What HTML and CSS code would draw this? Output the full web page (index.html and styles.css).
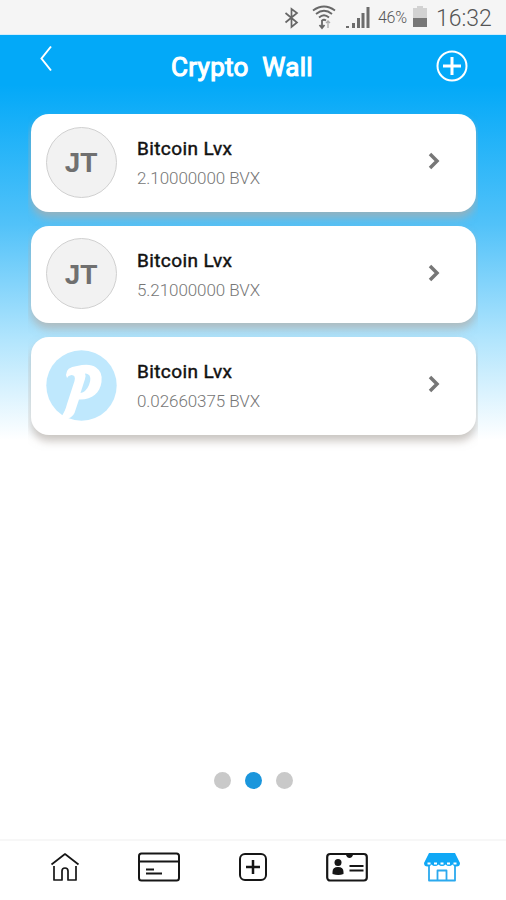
FILE: index.html
```html
<!DOCTYPE html>
<html lang="en">
<head>
<meta charset="utf-8">
<title>Crypto Wall</title>
<link rel="stylesheet" href="styles.css">
</head>
<body>
<div class="status">
  <svg class="bt" width="16" height="22" viewBox="0 0 16 22"><path d="M1.5 6 13 15.5 7.5 20V2L13 6 1.5 15.5"/></svg>
  <svg class="wifi" width="26" height="25" viewBox="0 0 26 25"><path d="M2 5.500Q13-2.500 24 5.500M5 9Q13 2.500 21 9M8 12.500Q13 8 18 12.500M11 15.500q2-1.500 4 0"/><path class="down" d="M11 15v7M8.500 20l2.500 3 2.500-3"/><path class="up" d="M17 23v-7M15 18l2-2 2 2"/></svg>
  <svg class="signal" width="24" height="22" viewBox="0 0 24 22"><path d="M0 19h3v2H0zM6 16h3v5H6zM11 11h3v10h-3zM15.500 6h3v15h-3zM20.500 0h3v21h-3z"/></svg>
  <span class="percent">46%</span>
  <svg class="battery" width="14" height="21" viewBox="0 0 14 21"><path fill="#d2d2d2" d="M4 0h6v2h4v11H0V2h4z"/><path fill="#777" d="M0 12h14v9H0z"/></svg>
  <span class="time">16:32</span>
</div>
<div class="screen">
  <header class="header">
    <svg class="back" width="14" height="27" viewBox="0 0 14 27"><path d="M12 1.500 2.500 13.500 12 25.500"/></svg>
    <h1>Crypto&nbsp; Wall</h1>
    <svg class="add" width="32" height="32" viewBox="0 0 32 32"><circle cx="16" cy="16" r="14.500"/><path d="M16 7v18M7 16h18"/></svg>
  </header>
  <main class="cards">
    <article class="card">
      <div class="avatar">JT</div>
      <div class="info"><h2>Bitcoin Lvx</h2><p>2.10000000 BVX</p></div>
      <svg class="go" width="12" height="18" viewBox="0 0 12 18"><path d="M2 2l7 7-7 7"/></svg>
    </article>
    <article class="card">
      <div class="avatar">JT</div>
      <div class="info"><h2>Bitcoin Lvx</h2><p>5.21000000 BVX</p></div>
      <svg class="go" width="12" height="18" viewBox="0 0 12 18"><path d="M2 2l7 7-7 7"/></svg>
    </article>
    <article class="card">
      <svg class="coin" width="71" height="71" viewBox="0 0 71 71"><circle cx="35.500" cy="35.500" r="35.200" fill="#bfe8fd"/><path fill="#fff" fill-rule="evenodd" d="M20 25Q20 17 31 16Q44 13 50 17.500Q57 22 55.500 32C54 43 46 50 33 49.500L28.500 63Q26 68.500 19 69L15 67Q19 62 21 54L28.500 31Q30 25 25.500 25Q22 25.500 21 28ZM39 23.500Q40 25 39 29L34.500 43Q40 42 43 35Q47 24 39 23.500Z"/></svg>
      <div class="info"><h2>Bitcoin Lvx</h2><p>0.02660375 BVX</p></div>
      <svg class="go" width="12" height="18" viewBox="0 0 12 18"><path d="M2 2l7 7-7 7"/></svg>
    </article>
  </main>
  <div class="dots"><i></i><i class="on"></i><i></i></div>
</div>
<nav class="tabs">
  <svg width="30" height="30" viewBox="0 0 30 30"><path stroke-width="1.700" d="M1.500 12.500 15 2l13.500 10.500M4 14v14h8v-9q0-3 3-3t3 3v9h8V14"/></svg>
  <svg width="42" height="30" viewBox="0 0 42 30"><rect x="1" y="1.500" width="40" height="27" rx="2.500" stroke-width="2"/><path stroke-width="2" d="M1 9.500h40"/><path stroke-width="1.800" d="M8 17.500h8M8 21.500h16"/></svg>
  <svg width="30" height="30" viewBox="0 0 30 30"><rect x="2" y="2" width="26" height="26" rx="5" stroke-width="2"/><path stroke-width="2.500" d="M15 8v14M8 15h14"/></svg>
  <svg width="42" height="30" viewBox="0 0 42 30"><rect x="1.200" y="2" width="39.600" height="26.500" rx="3" stroke-width="2.200"/><path fill="#161616" stroke="none" d="M20 1h7v2q-1 3-3.500 3T20 3zM6.500 22v-2q0-5 5.500-5t5.500 5v2q-5 2-11 0z"/><circle cx="12" cy="10.500" r="3.500" fill="#161616" stroke="none"/><path stroke-width="2" d="M23.500 14h14M23.500 18.500h14"/></svg>
  <svg class="shop" width="38" height="30" viewBox="0 0 38 30"><path stroke-width="1.800" d="M6 11v17.500h26V11M14.500 28V18.500h9V28"/><path fill="#10a8f6" stroke="none" d="M6 1h26l5 10q0 3.500-3.500 3.500-3 0-4-2-1.500 1.500-3.500 1.500t-3.500-1.500Q21 14 19 14t-3.500-1.500Q14 14 12 14t-3.500-1.500q-1 2-4 2Q1 14.500 1 11z"/><path stroke="#fff" stroke-width="1.800" d="M4.500 11.500h3M11 11.500h3M17.500 11.500h3M24 11.500h3M30.500 11.500h3"/></svg>
</nav>
</body>
</html>
```

FILE: styles.css
```css
* { box-sizing: border-box; }
body { margin: 0; width: 506px; height: 900px; display: flex; flex-direction: column; overflow: hidden; background: #fff; font-family: Roboto, sans-serif; }
svg { flex: none; fill: none; }
h1, h2, p { margin: 0; white-space: nowrap; }

.status { height: 35px; flex: none; display: flex; align-items: flex-start; padding: 6px 0 0 284px; background: #f5f5f5; border-bottom: 1px solid #d2edfb; color: #777; }
.bt { margin-top: 1px; stroke: #666; stroke-width: 1.7; }
.wifi { margin-left: 11px; margin-top: -1px; stroke: #686868; stroke-width: 1.8; }
.wifi .up { stroke: #aaa; stroke-width: 1.3; }
.signal { margin-left: 9px; margin-top: 1px; fill: #6c6c6c; }
.percent { width: 35px; padding-left: 8px; font-size: 16px; line-height: 24px; letter-spacing: -.3px; font-weight: 300; color: #555; }
.battery { margin-left: 8px; }
.time { margin-left: 9px; font-size: 23px; line-height: 25px; font-weight: 300; color: #555; }

.screen { height: 804px; flex: none; display: flex; flex-direction: column; background: linear-gradient(#03a9f8 0, #03a9f8 50px, #52c2f9 190px, #b2e5fd 305px, #fff 405px); }
.header { height: 70px; flex: none; display: flex; align-items: flex-start; padding: 0 37px 0 39px; }
.back { margin-top: 10px; stroke: #fff; stroke-width: 2; }
h1 { margin: 17px 0 0 118px; width: 265px; font-size: 26px; line-height: 30px; font-weight: 400; letter-spacing: .3px; color: #fff; -webkit-text-stroke: 1.1px #fff; }
.add { margin: 15px 0 0; stroke: #fff; stroke-width: 2; }
.add path { stroke-width: 3; }

.cards { height: 350px; flex: none; margin: 0 28px; padding: 9px 2px 0 3px; display: flex; flex-direction: column; gap: 14px; overflow: hidden; }
.card { width: 445px; height: 97.5px; flex: none; display: flex; align-items: center; padding: 0 0 1px 14.5px; border-radius: 18px; background: #fff; box-shadow: 0 6px 9px rgba(180, 172, 167, .7); }
.avatar, .coin { width: 71px; height: 71px; flex: none; }
.avatar { display: flex; align-items: center; justify-content: center; border: 1px solid #d0d0d0; border-radius: 50%; background: #f2f2f2; color: #707070; font: bold 28px/1 "Liberation Sans", sans-serif; padding-top: 2px; }
.info { width: 291px; margin-left: 20.5px; padding-top: 2px; }
h2 { font-size: 19px; line-height: 26px; font-weight: 400; letter-spacing: .4px; color: #111; -webkit-text-stroke: .45px #111; }
p { margin-top: 4px; font-size: 17px; line-height: 24px; font-weight: 300; letter-spacing: -.08px; color: #777; }
.go { margin-top: -2px; stroke: #777; stroke-width: 3.5; }

.dots { display: flex; justify-content: center; gap: 14px; margin-top: 316.5px; }
.dots i { width: 17px; height: 17px; border-radius: 50%; background: #c9c9c9; }
.dots .on { background: #1b96dc; }

.tabs { height: 61px; flex: none; display: flex; gap: 58px; padding: 11px 0 0 50px; border-top: 2px solid #f7f7f7; background: #fff; }
.tabs svg { stroke: #161616; stroke-linejoin: round; }
.tabs .shop { stroke: #2ba9ee; margin-left: -3px; }
```
